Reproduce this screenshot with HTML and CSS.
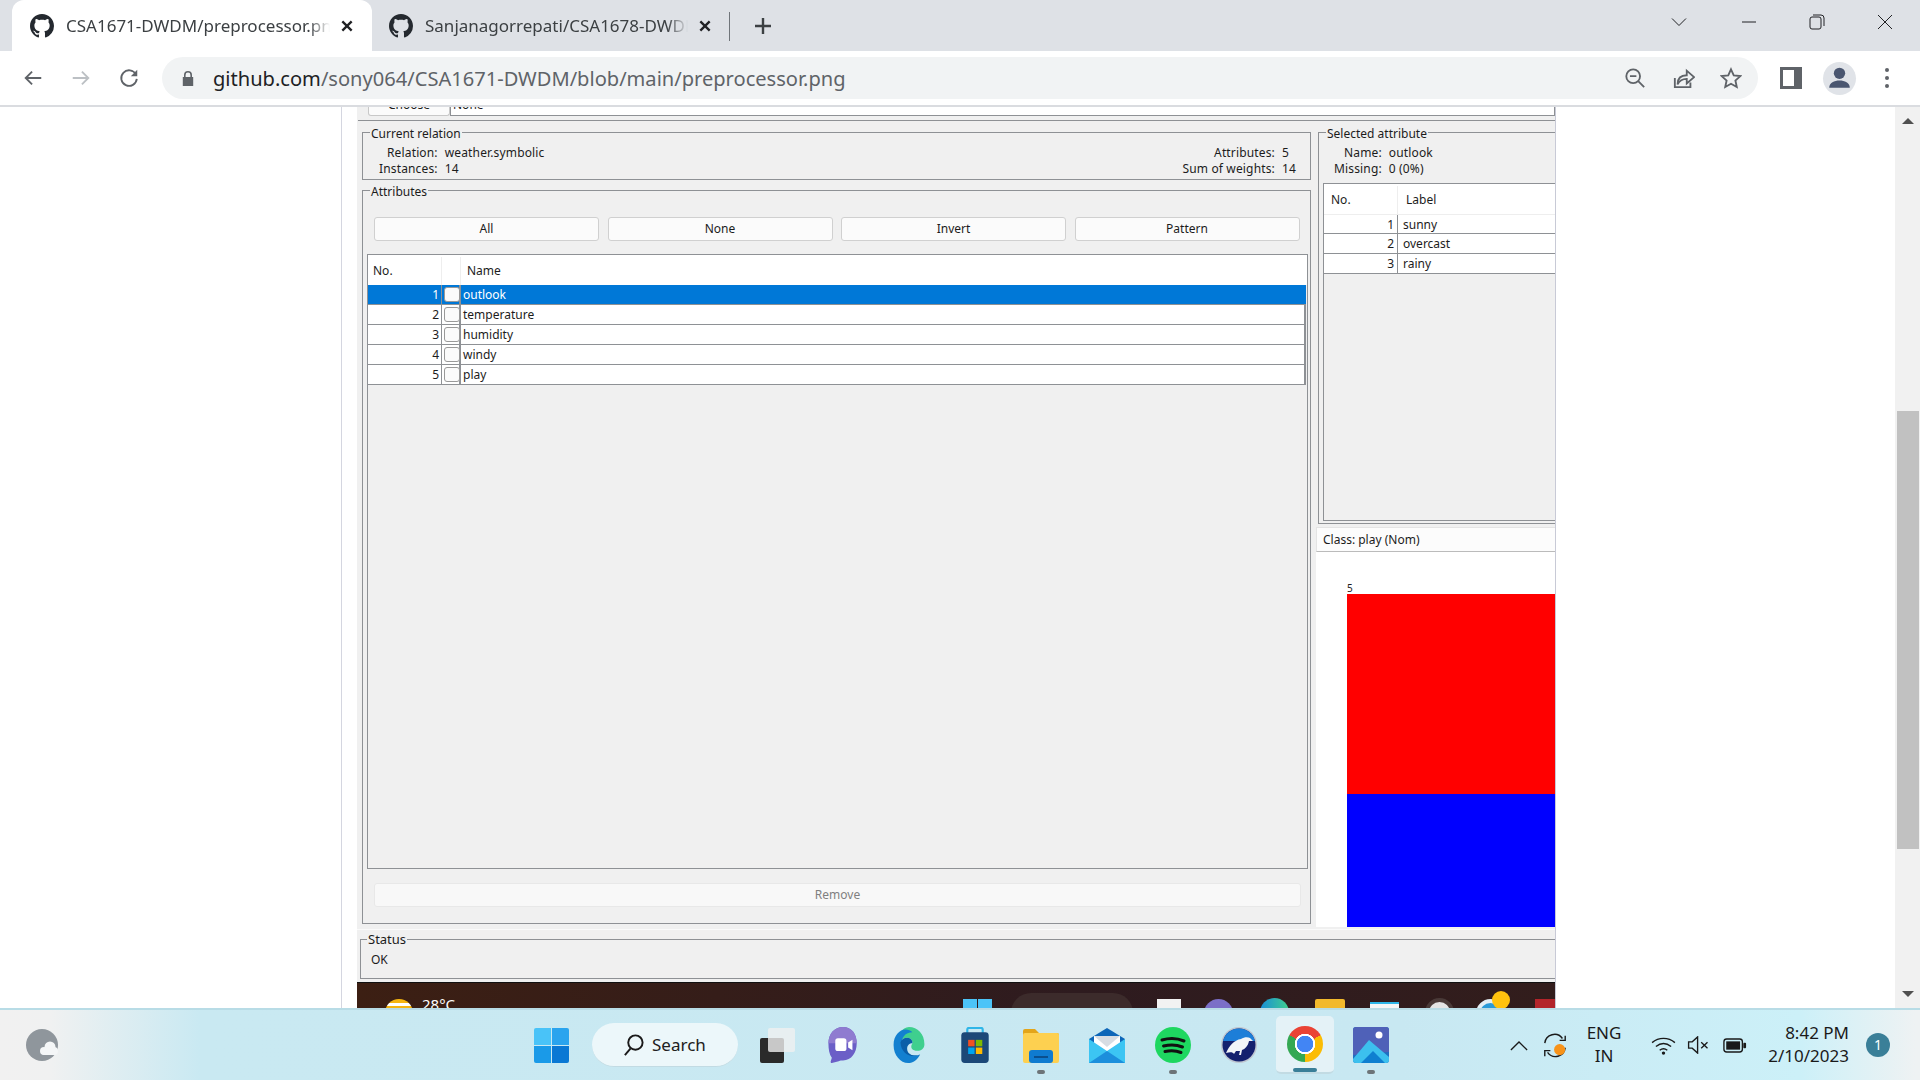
FILE: index.html
```html
<!DOCTYPE html>
<html>

<head>
    <title>CSA1671-DWDM/preprocessor.png</title>
    <link rel="stylesheet" href="styles.css">
</head>

<body>
    <!-- Browser tabs -->
    <div class="tabstrip">
        <div class="tab tab-active">
            <svg class="favicon" viewBox="0 0 16 16"><path d="M8 0C3.58 0 0 3.58 0 8c0 3.54 2.29 6.53 5.47 7.59.4.07.55-.17.55-.38 0-.19-.01-.82-.01-1.49-2.01.37-2.53-.49-2.69-.94-.09-.23-.48-.94-.82-1.13-.28-.15-.68-.52-.01-.53.63-.01 1.08.58 1.23.82.72 1.21 1.87.87 2.33.66.07-.52.28-.87.51-1.07-1.78-.2-3.64-.89-3.64-3.95 0-.87.31-1.59.82-2.15-.08-.2-.36-1.02.08-2.12 0 0 .67-.21 2.2.82.64-.18 1.32-.27 2-.27.68 0 1.36.09 2 .27 1.53-1.04 2.2-.82 2.2-.82.44 1.1.16 1.92.08 2.12.51.56.82 1.27.82 2.15 0 3.07-1.87 3.75-3.65 3.95.29.25.54.73.54 1.48 0 1.07-.01 1.93-.01 2.2 0 .21.15.46.55.38A8.013 8.013 0 0016 8c0-4.42-3.58-8-8-8z"/></svg>
            <span class="tab-title">CSA1671-DWDM/preprocessor.png</span>
            <svg class="tab-close" viewBox="0 0 12 12"><path d="M2 2l8 8M10 2l-8 8"/></svg>
        </div>
        <div class="tab tab-other">
            <svg class="favicon" viewBox="0 0 16 16"><path d="M8 0C3.58 0 0 3.58 0 8c0 3.54 2.29 6.53 5.47 7.59.4.07.55-.17.55-.38 0-.19-.01-.82-.01-1.49-2.01.37-2.53-.49-2.69-.94-.09-.23-.48-.94-.82-1.13-.28-.15-.68-.52-.01-.53.63-.01 1.08.58 1.23.82.72 1.21 1.87.87 2.33.66.07-.52.28-.87.51-1.07-1.78-.2-3.64-.89-3.64-3.95 0-.87.31-1.59.82-2.15-.08-.2-.36-1.02.08-2.12 0 0 .67-.21 2.2.82.64-.18 1.32-.27 2-.27.68 0 1.36.09 2 .27 1.53-1.04 2.2-.82 2.2-.82.44 1.1.16 1.92.08 2.12.51.56.82 1.27.82 2.15 0 3.07-1.87 3.75-3.65 3.95.29.25.54.73.54 1.48 0 1.07-.01 1.93-.01 2.2 0 .21.15.46.55.38A8.013 8.013 0 0016 8c0-4.42-3.58-8-8-8z"/></svg>
            <span class="tab-title">Sanjanagorrepati/CSA1678-DWDM</span>
            <svg class="tab-close" viewBox="0 0 12 12"><path d="M2 2l8 8M10 2l-8 8"/></svg>
        </div>
        <svg class="new-tab" viewBox="0 0 20 20"><path d="M10 2v16M2 10h16"/></svg>
        <div class="window-controls">
            <svg class="win-btn" viewBox="0 0 16 16"><path d="M1 4.5l7 7 7-7"/></svg>
            <svg class="win-btn" viewBox="0 0 16 16"><path d="M1 8h14"/></svg>
            <svg class="win-btn" viewBox="0 0 16 16"><rect x="1" y="3" width="11" height="12" rx="2"/><path d="M4 1h8a3 3 0 0 1 3 3v8"/></svg>
            <svg class="win-btn" viewBox="0 0 16 16"><path d="M1 1l14 14M15 1L1 15"/></svg>
        </div>
    </div>

    <!-- Address bar -->
    <div class="toolbar">
        <div class="tool"><svg class="tool-icon" viewBox="0 0 24 24"><path d="M21 12H4M11 5l-7 7 7 7"/></svg></div>
        <div class="tool tool-off"><svg class="tool-icon" viewBox="0 0 24 24"><path d="M3 12h17M13 5l7 7-7 7"/></svg></div>
        <div class="tool"><svg class="tool-icon" viewBox="0 0 24 24"><path d="M19.5 8A8.5 8.5 0 1 0 20.5 13"/><path class="solid" d="M21 3v7h-7z"/></svg></div>
        <div class="omnibox">
            <svg class="lock" viewBox="0 0 12 16"><path d="M2 7V5a4 4 0 0 1 8 0v2h1.2v9H.8V7zm1.6 0h4.8V5a2.4 2.4 0 0 0-4.8 0z"/></svg>
            <span class="url"><b>github.com</b>/sony064/CSA1671-DWDM/blob/main/preprocessor.png</span>
            <div class="omni-icons">
                <svg class="tool-icon" viewBox="0 0 24 24"><circle cx="10" cy="10" r="7.5"/><path d="M6.5 10h7M15.5 15.5L22 22"/></svg>
                <svg class="tool-icon" viewBox="0 0 24 24"><path d="M2 12v10h17v-5"/><path d="M5 19c0-7 4-10 10-10V4l8 7-8 7v-5c-5 0-8 2-10 6z"/></svg>
                <svg class="tool-icon" viewBox="0 0 24 24"><path d="M12 2.5l3 6.6 7.2.8-5.4 4.8 1.5 7.1-6.3-3.6-6.3 3.6 1.5-7.1L1.800 9.900 9 9.100z"/></svg>
            </div>
        </div>
        <div class="tool tool-first"><svg class="panel-icon" viewBox="0 0 22 22"><path d="M0 0h22v22H0zM3 3v16h11V3z" fill-rule="evenodd"/></svg></div>
        <div class="tool"><div class="avatar"><svg viewBox="0 0 32 32"><circle cx="16" cy="11" r="5.500"/><path d="M6 25c0-5 5-7 10-7s10 2 10 7z"/></svg></div></div>
        <div class="tool"><div class="dots"><i></i><i></i><i></i></div></div>
    </div>

    <div class="viewer">
        <div class="gutter"></div>
        <div class="shot">
            <div class="file-strip">
                <div class="choose"><span>Choose</span></div>
                <div class="filter-field"><span>None</span></div>
            </div>

            <div class="explorer">
                <div class="left-col">
                    <fieldset class="group relation">
                        <legend>Current relation</legend>
                        <div class="summary">
                            <div class="pairs">
                                <span class="key">Relation:</span><span>weather.symbolic</span>
                                <span class="key">Instances:</span><span>14</span>
                            </div>
                            <div class="pairs">
                                <span class="key">Attributes:</span><span>5</span>
                                <span class="key">Sum of weights:</span><span>14</span>
                            </div>
                        </div>
                    </fieldset>

                    <fieldset class="group attributes">
                        <legend>Attributes</legend>
                        <div class="button-row">
                            <div class="btn">All</div>
                            <div class="btn">None</div>
                            <div class="btn">Invert</div>
                            <div class="btn">Pattern</div>
                        </div>
                        <div class="attr-table">
                            <div class="attr-head">
                                <div class="head-no">No.</div>
                                <div class="head-check"></div>
                                <div class="head-name">Name</div>
                            </div>
                            <div class="attr-row selected"><div class="cell-no">1</div><div class="cell-check"><i></i></div><div class="cell-name">outlook</div></div>
                            <div class="attr-row"><div class="cell-no">2</div><div class="cell-check"><i></i></div><div class="cell-name">temperature</div></div>
                            <div class="attr-row"><div class="cell-no">3</div><div class="cell-check"><i></i></div><div class="cell-name">humidity</div></div>
                            <div class="attr-row"><div class="cell-no">4</div><div class="cell-check"><i></i></div><div class="cell-name">windy</div></div>
                            <div class="attr-row"><div class="cell-no">5</div><div class="cell-check"><i></i></div><div class="cell-name">play</div></div>
                        </div>
                        <div class="btn btn-off">Remove</div>
                    </fieldset>
                </div>

                <div class="right-col">
                    <fieldset class="group selected-attr">
                        <legend>Selected attribute</legend>
                        <div class="pairs">
                            <span class="key">Name:</span><span>outlook</span>
                            <span class="key">Missing:</span><span>0 (0%)</span>
                        </div>
                        <div class="label-table">
                            <div class="label-head"><div>No.</div><div class="head-label">Label</div></div>
                            <div class="label-row"><div class="cell-no">1</div><div class="cell-label">sunny</div></div>
                            <div class="label-row"><div class="cell-no">2</div><div class="cell-label">overcast</div></div>
                            <div class="label-row"><div class="cell-no">3</div><div class="cell-label">rainy</div></div>
                        </div>
                    </fieldset>
                    <div class="class-box">Class: play (Nom)</div>
                    <div class="plot">
                        <div class="plot-count">5</div>
                        <div class="bar-red"></div>
                        <div class="bar-blue"></div>
                    </div>
                </div>
            </div>

            <fieldset class="group status">
                <legend>Status</legend>
                <div>OK</div>
            </fieldset>

            <!-- the taskbar of the photographed machine, cut off -->
            <div class="inner-taskbar">
                <div class="inner-sun"></div>
                <span class="inner-temp">28°C</span>
                <div class="inner-start"><i></i><i></i><i></i><i></i></div>
                <div class="inner-pill"><span></span></div>
                <div class="inner-task"></div>
                <div class="inner-teams"></div>
                <div class="inner-edge"></div>
                <div class="inner-folder"></div>
                <div class="inner-bag"></div>
                <div class="inner-round"></div>
                <div class="inner-edge2"><div class="inner-dot"></div></div>
                <div class="inner-mail"></div>
            </div>
        </div>
        <div class="page-rest"></div>
        <div class="scrollbar">
            <div class="arrow-up"></div>
            <div class="thumb"></div>
            <div class="arrow-down"></div>
        </div>
    </div>

    <!-- Windows taskbar -->
    <div class="taskbar">
        <div class="widget">
            <svg viewBox="0 0 32 32" width="32" height="32"><circle cx="16" cy="16" r="16" fill="#8f969c"/><circle cx="24" cy="18" r="5.500" fill="#f4f6f7"/><circle cx="18" cy="22" r="4" fill="#f4f6f7"/><circle cx="28" cy="22" r="4" fill="#f4f6f7"/><rect x="16" y="21" width="14" height="5" rx="2.500" fill="#f4f6f7"/></svg>
        </div>
        <div class="app"><div class="start"><i></i><i></i><i></i><i></i></div></div>
        <div class="search">
            <svg viewBox="0 0 24 24"><circle cx="14" cy="10" r="7.500"/><path d="M9 16l-6 7"/></svg>
            <span>Search</span>
        </div>
        <div class="apps">
            <div class="app"><div class="taskview"><i></i><b></b></div></div>
            <div class="app">
                <svg class="app-icon" viewBox="0 0 36 42"><path d="M18 0c10 0 16 8 16 19s-6 20-16 20c-2 0-3 0-5 1l-8 2c-1 0-2-1-1-3l1-3C2 32 1 26 1 19 1 8 8 0 18 0z" fill="#6b5fc7"/><path d="M18 0c10 0 16 8 16 19H1C1 8 8 0 18 0z" fill="#8f7bd0"/><rect x="9" y="13" width="13" height="15" rx="3" fill="#fff"/><path d="M24 18l5-3v12l-5-3z" fill="#fff"/></svg>
            </div>
            <div class="app">
                <svg class="app-icon" viewBox="0 0 36 42"><path d="M18 0C28 0 36 8 36 20c0 7-7 9-12 7-4-1-4-5-2-8 1-8-12-9-14-1C4 10 10 0 18 0z" fill="#3fcf8e"/><path d="M0 21C0 10 7 3 14 3c3 0 6 1 8 3-8 0-14 6-12 16 2 9 12 14 21 10-3 6-8 10-14 10C8 42 0 33 0 21z" fill="#1380d0"/><path d="M8 18c2-8 15-7 14 1-3 0-7 2-6 8 1 5 8 8 15 5-9 5-22 0-23-14z" fill="#0a5ea8"/></svg>
            </div>
            <div class="app">
                <svg class="app-icon" viewBox="0 0 36 42"><path d="M9 8V3a2 2 0 0 1 2-2h14a2 2 0 0 1 2 2v5" fill="none" stroke="#2fb6e8" stroke-width="2.500"/><rect x="2" y="6" width="32" height="36" rx="4" fill="#1c4878"/><rect x="10" y="15" width="7.500" height="7.500" fill="#f25022"/><rect x="19" y="15" width="7.500" height="7.500" fill="#7fba00"/><rect x="10" y="24" width="7.500" height="7.500" fill="#00a4ef"/><rect x="19" y="24" width="7.500" height="7.500" fill="#ffb900"/></svg>
            </div>
            <div class="app running">
                <svg class="app-icon" viewBox="0 0 36 36"><path d="M0 4a2 2 0 0 1 2-2h10l4 4h18a2 2 0 0 1 2 2v6H0z" fill="#e3a51a"/><rect y="6" width="36" height="30" rx="2" fill="#fdd050"/><rect x="6" y="23" width="24" height="13" rx="3" fill="#0f7bd0"/><rect x="11" y="29" width="14" height="2" fill="#0a4f8e"/></svg>
            </div>
            <div class="app">
                <svg class="app-icon" viewBox="0 0 36 36"><path d="M18 1l18 11v24H0V12z" fill="#0d66b8"/><path d="M5 9h26v12l-13 8-13-8z" fill="#fff"/><path d="M5 9h26l-13 11z" fill="#d7dde3"/><path d="M0 12l18 12 18-12v24H0z" fill="#3cc5f3"/><path d="M0 36l18-12 18 12z" fill="#1c8fdc"/></svg>
            </div>
            <div class="app running">
                <svg class="app-icon" viewBox="0 0 36 36"><circle cx="18" cy="18" r="18" fill="#1ed760"/><path d="M7 13c7-2 15-2 22 1M8.500 19c6-1.500 13-1.500 19 1M10 24.500c5-1 11-1 16 1" fill="none" stroke="#111" stroke-width="3" stroke-linecap="round"/></svg>
            </div>
            <div class="app">
                <svg class="app-icon" viewBox="0 0 36 36"><circle cx="18" cy="18" r="18" fill="#bfc6d0"/><circle cx="18" cy="18" r="16.500" fill="#14206e"/><path d="M18 1.500A16.500 16.500 0 0 1 34 14H2A16.500 16.500 0 0 1 18 1.500z" fill="#1d7ed8"/><path d="M5 26c3-7 8-13 15-14 3-2 7-2 9-1l3 3-4 0c-1 5-4 8-7 9l-1 5h-2l1-4-4 0-2 3c-1-2-4-2-8-1z" fill="#f2f4f8"/></svg>
            </div>
            <div class="app app-active">
                <div class="chrome"></div>
            </div>
            <div class="app running">
                <svg class="app-icon" viewBox="0 0 36 36"><rect width="36" height="36" rx="3" fill="#1e6fc2"/><path d="M0 3a3 3 0 0 1 3-3h30a3 3 0 0 1 3 3v22L0 28z" fill="#4f61b8"/><circle cx="26" cy="8" r="3.500" fill="#fff"/><path d="M0 32l16-19 20 17v3a3 3 0 0 1-3 3H3a3 3 0 0 1-3-3z" fill="#3cc0ee"/><path d="M8 36l12-12 12 12z" fill="#0f7fd0"/></svg>
            </div>
        </div>
        <div class="tray">
            <svg class="tray-icon chev" viewBox="0 0 20 12"><path d="M1 11l9-9 9 9"/></svg>
            <svg class="tray-icon sync" viewBox="0 0 28 28"><path d="M3 12a10.500 10.500 0 0 1 19-5M25 4v5h-6M25 17a10.500 10.500 0 0 1-19 5M3 26v-6h6"/><circle class="sync-dot" cx="19" cy="19" r="6"/></svg>
            <div class="lang"><span>ENG</span><span>IN</span></div>
            <svg class="tray-icon wifi" viewBox="0 0 26 20"><path d="M1 7c7-6 17-6 24 0M5 11c5-4 11-4 16 0M9 15c2.500-2 5.500-2 8 0"/><circle class="solid" cx="13" cy="18" r="1.800"/></svg>
            <svg class="tray-icon speaker" viewBox="0 0 24 20"><path d="M1 6.500h4L11 1v18l-6-5.500H1zM15 7l7 6.500M22 7l-7 6.500"/></svg>
            <svg class="tray-icon battery" viewBox="0 0 26 16"><rect x="1" y="1" width="20" height="14" rx="3"/><rect class="solid" x="3.500" y="3.500" width="15" height="9"/><rect class="solid" x="22" y="5" width="3" height="6" rx="1"/></svg>
            <div class="clock"><span>8:42 PM</span><span>2/10/2023</span></div>
            <div class="badge">1</div>
        </div>
    </div>
</body>

</html>
```

FILE: styles.css
```css
* {
    box-sizing: border-box;
}

body {
    margin: 0;
    width: 1920px;
    height: 1080px;
    overflow: hidden;
    display: flex;
    flex-direction: column;
    background: #fff;
    font-family: "Noto Sans", sans-serif;
}

/* Tab strip */
.tabstrip {
    height: 51px;
    flex: none;
    display: flex;
    background: #dee1e6;
    color: #3c4043;
}

.tab {
    display: flex;
    align-items: center;
    font-size: 17px;
}

.tab-active {
    width: 360px;
    margin-left: 12px;
    padding: 0 18px 0 18px;
    background: #fff;
    border-radius: 12px 12px 0 0;
}

.tab-other {
    position: relative;
    width: 358px;
    padding: 0 18px 0 17px;
}

.tab-other::after {
    content: "";
    position: absolute;
    right: 0;
    top: 12px;
    height: 29px;
    border-right: 1px solid #70757a;
}

.favicon {
    width: 24px;
    height: 24px;
    flex: none;
    fill: #24292f;
}

.tab-title {
    flex: 1;
    margin-left: 12px;
    white-space: nowrap;
    overflow: hidden;
    -webkit-mask-image: linear-gradient(to right, #000 92%, transparent);
    mask-image: linear-gradient(to right, #000 92%, transparent);
}

.tab-close {
    width: 14px;
    height: 14px;
    flex: none;
    margin-left: 10px;
    fill: none;
    stroke: #202124;
    stroke-width: 2;
}

.new-tab {
    width: 20px;
    height: 20px;
    margin: 16px 0 0 23px;
    fill: none;
    stroke: #3c4043;
    stroke-width: 2.4;
}

.window-controls {
    margin-left: auto;
    margin-right: 1px;
    display: flex;
}

.win-btn {
    box-sizing: content-box;
    width: 16px;
    height: 16px;
    padding: 14px 26px 21px;
    fill: none;
    stroke: #202124;
    stroke-width: 1;
}

.win-btn:first-child {
    padding-right: 28px;
}

/* Address bar */
.toolbar {
    height: 56px;
    flex: none;
    display: flex;
    padding: 6px 9px 8px 9px;
    background: #fff;
    border-bottom: 2px solid #dadce0;
}

.tool {
    width: 48px;
    height: 42px;
    flex: none;
    display: flex;
    align-items: center;
    justify-content: center;
}

.tool-icon {
    width: 22px;
    height: 22px;
    fill: none;
    stroke: #5f6368;
    stroke-width: 2;
}

.tool-icon .solid {
    fill: #5f6368;
    stroke: none;
}

.tool-off .tool-icon {
    stroke: #bcc0c4;
}

.tool-first {
    margin-left: 9px;
}

.omnibox {
    flex: 1;
    margin-left: 9px;
    height: 42px;
    display: flex;
    align-items: center;
    padding: 0 16px 0 20px;
    border-radius: 21px;
    background: #f1f3f4;
}

.lock {
    width: 12px;
    height: 16px;
    fill: #5f6368;
}

.url {
    margin-left: 19px;
    font-size: 20.08px;
    color: #5f6368;
    white-space: nowrap;
}

.url b {
    font-weight: normal;
    color: #202124;
}

.omni-icons {
    margin-left: auto;
    display: flex;
    gap: 25px;
}

.omni-icons svg:first-child {
    margin-right: 2px;
}

.panel-icon {
    width: 22px;
    height: 22px;
    fill: #5f6368;
}

.avatar {
    width: 33px;
    height: 33px;
    border-radius: 50%;
    background: #e0e3e8;
}

.avatar svg {
    display: block;
    fill: #4a5670;
}

.dots {
    display: flex;
    flex-direction: column;
    gap: 4px;
}

.dots i {
    width: 4px;
    height: 4px;
    border-radius: 50%;
    background: #5f6368;
}

/* Page area */
.viewer {
    flex: 1;
    display: flex;
    min-height: 0;
}

.gutter {
    width: 342px;
    flex: none;
    border-right: 1px solid #d4d6e0;
}

.shot {
    width: 1199px;
    margin-left: 15px;
    flex: none;
    overflow: hidden;
    background: #f0f0f0;
    color: #1c1c1c;
    font-size: 12px;
    line-height: 16px;
    border-right: 1px solid #c8cad6;
}

.page-rest {
    flex: 1;
}

.scrollbar {
    width: 25px;
    flex: none;
    display: flex;
    flex-direction: column;
    align-items: center;
    padding-top: 11px;
    background: #f1f1f1;
}

.arrow-up {
    border: 6px solid transparent;
    border-top: 0;
    border-bottom: 6px solid #505050;
}

.thumb {
    width: 22px;
    height: 438px;
    margin-top: 287px;
    background: #c1c1c1;
}

.arrow-down {
    margin-top: 142px;
    border: 6px solid transparent;
    border-bottom: 0;
    border-top: 6px solid #505050;
}

/* Weka window */
.file-strip {
    height: 14px;
    display: flex;
    margin: 0 0 0 1px;
    padding-left: 10px;
    background: #f0f0f0;
    border-bottom: 1px solid #8e9195;
    overflow: hidden;
}

.choose {
    width: 82px;
    height: 9px;
    display: flex;
    justify-content: center;
    align-items: flex-end;
    background: #fbfbfb;
    border: 1px solid #c8c8c8;
    border-top: 0;
    border-radius: 0 0 3px 3px;
}

.filter-field {
    flex: 1;
    height: 9px;
    padding-left: 2px;
    display: flex;
    align-items: flex-end;
    background: #fff;
    border: 1px solid #8e9195;
    border-top: 0;
}

.choose span,
.filter-field span {
    line-height: 14px;
    flex: none;
    margin-bottom: 3px;
}

.explorer {
    display: flex;
    height: 809px;
    padding-left: 1px;
    border-bottom: 1px solid #fafafa;
}

.left-col {
    width: 958px;
    flex: none;
    padding: 1px 5px 0 4px;
}

.group {
    margin: 0;
    min-width: 0;
    border: 1px solid #8e9195;
    border-radius: 0;
}

/* the line of a group box runs just above the middle of its title */
.group legend {
    padding: 4px 1px 0;
    margin-left: 0;
    line-height: 16px;
}

.relation {
    height: 58px;
    padding: 3px 14px 0 8px;
}

.relation legend {
    margin-left: -1px;
}

.summary {
    display: flex;
    justify-content: space-between;
}

.pairs {
    display: grid;
    grid-template-columns: auto auto;
    column-gap: 7px;
    justify-content: start;
    letter-spacing: 0.15px;
}

.key {
    text-align: right;
}

.relation .pairs:first-child {
    margin-left: 8px;
}

.attributes {
    height: 744px;
    padding: 17px 2px 0 4px;
}

.attributes legend {
    margin-left: 3px;
}

.button-row {
    display: grid;
    grid-template-columns: repeat(4, 225px);
    column-gap: 8.5px;
    margin-left: 7px;
}

.btn {
    height: 24px;
    line-height: 22px;
    text-align: center;
    background: #fbfbfb;
    border: 1px solid #d0d0d0;
    border-radius: 3px;
}

.attr-table {
    height: 615px;
    margin-top: 13px;
    background: #f0f0f0;
    border: 1px solid #8e9195;
}

.attr-head {
    height: 30px;
    display: flex;
    align-items: center;
    padding-top: 2px;
    background: #fff;
}

.head-no {
    width: 74px;
    padding-left: 5px;
    line-height: 28px;
    border-right: 1px solid #eee;
}

.head-check {
    width: 19px;
    height: 28px;
    border-right: 1px solid #eee;
}

.head-name {
    padding-left: 6px;
}

.attr-row {
    height: 20px;
    display: flex;
    margin-right: 1px;
    background: #fff;
    border-bottom: 1px solid #8e9195;
    border-right: 2px solid #8e9195;
}

.attr-row.selected {
    background: #0078d7;
    color: #fff;
    border-right: 0;
}

.cell-no {
    width: 74px;
    padding-right: 2px;
    text-align: right;
    border-right: 1px solid #8e9195;
    line-height: 19px;
}

.cell-check {
    width: 19px;
    padding: 2px 1px 0 2px;
    border-right: 2px solid #8e9195;
}

.cell-check i {
    display: block;
    width: 16px;
    height: 15px;
    background: #fbfbfb;
    border: 1px solid #999;
    border-radius: 3px;
}

.cell-name {
    padding-left: 2px;
    line-height: 19px;
}

.btn-off {
    margin: 14px 7px 0;
    color: #808080;
    background: #f8f8f8;
    border-color: #e8e8e8;
}

/* Right column */
.right-col {
    flex: 1;
    min-width: 0;
    overflow: hidden;
}

.selected-attr {
    width: 300px;
    height: 402px;
    margin: 1px 0 0 2px;
    padding: 3px 0 0 4px;
}

.selected-attr legend {
    margin-left: 3px;
}

.selected-attr .pairs {
    margin-left: 11px;
}

.label-table {
    height: 338px;
    margin: 6px 0 0 0;
    border: 1px solid #8e9195;
}

.label-head {
    height: 30px;
    display: flex;
    align-items: center;
    padding-top: 2px;
    background: #fff;
}

.label-head div:first-child {
    width: 74px;
    padding-left: 7px;
    line-height: 28px;
    border-right: 1px solid #eee;
}

.head-label {
    padding-left: 8px;
}

.label-row {
    height: 20px;
    display: flex;
    background: #fff;
    border-bottom: 1px solid #8e9195;
}

.label-row:nth-child(2) {
    border-top: 1px solid #eee;
    line-height: 18px;
}

.label-row .cell-no {
    width: 74px;
    padding-right: 3px;
}

.cell-label {
    padding-left: 5px;
    line-height: 19px;
}

.class-box {
    height: 25px;
    margin-top: 3px;
    padding-left: 6px;
    line-height: 23px;
    background: #fcfcfc;
    border-bottom: 1px solid #bbb;
    border-top: 1px solid #e4e4e4;
    border-left: 1px solid #e4e4e4;
}

.plot {
    height: 375px;
    padding-left: 31px;
    background: #fff;
}

.plot-count {
    height: 42px;
    padding-top: 30px;
    font-size: 10px;
    line-height: 12px;
}

.bar-red {
    height: 200px;
    background: #f00;
}

.bar-blue {
    height: 133px;
    background: #00f;
}

.status {
    width: 1300px;
    height: 48px;
    margin: 1px 0 3px 3px;
    padding: 5px 10px 0;
}

.status legend {
    font-size: 13px;
    margin-left: -4px;
    padding: 0 1px;
}

/* Taskbar seen inside the screenshot */
.inner-taskbar {
    height: 26px;
    display: flex;
    overflow: hidden;
    color: #fff;
    background: linear-gradient(to right, #3c1f13, #2e1b1f 60%, #321d1c);
    border-top: 1px solid #111;
}

.inner-sun {
    width: 28px;
    height: 28px;
    margin: 16px 0 0 28px;
    flex: none;
    border-radius: 50%;
    background: linear-gradient(transparent 15%, #fff 15% 25%, transparent 25%), #f5b50f;
}

.inner-temp {
    margin: 11px 0 0 9px;
    width: 50px;
    flex: none;
    line-height: 20px;
    font-size: 15px;
}

.inner-start {
    width: 29px;
    margin: 16px 0 0 491px;
    flex: none;
    display: grid;
    grid-template-columns: 1fr 1fr;
    gap: 1px;
}

.inner-start i {
    height: 14px;
    background: #4cc4f8;
}

.inner-pill {
    width: 122px;
    height: 40px;
    margin: 10px 0 0 19px;
    flex: none;
    border-radius: 20px;
    background: #3c2b2b;
}

.inner-task {
    width: 24px;
    height: 20px;
    margin: 16px 0 0 24px;
    flex: none;
    background: #f2f2f2;
}

.inner-teams {
    width: 29px;
    height: 29px;
    margin: 16px 0 0 23px;
    flex: none;
    border-radius: 50%;
    background: #7b6fc7;
}

.inner-edge {
    width: 29px;
    height: 29px;
    margin: 15px 0 0 27px;
    flex: none;
    border-radius: 50%;
    background: linear-gradient(to right, #1a8ed8, #3fcf8e);
}

.inner-folder {
    width: 30px;
    height: 22px;
    margin: 16px 0 0 26px;
    flex: none;
    background: #f2b92c;
    border-radius: 2px;
}

.inner-bag {
    width: 29px;
    height: 22px;
    margin: 19px 0 0 25px;
    flex: none;
    background: #f6f6f6;
    border-top: 2px solid #2fb6e8;
}

.inner-round {
    width: 29px;
    height: 29px;
    margin: 15px 0 0 26px;
    flex: none;
    border-radius: 50%;
    background: #e4e4e4;
    border: 4px solid #4a3a38;
}

.inner-edge2 {
    position: relative;
    width: 29px;
    height: 29px;
    margin: 16px 0 0 22px;
    flex: none;
    border-radius: 50%;
    background: #2a9ad8;
    border: 4px solid #e4eef4;
}

.inner-dot {
    position: absolute;
    left: 12px;
    top: -12px;
    width: 18px;
    height: 18px;
    border-radius: 50%;
    background: #ffc20e;
}

.inner-mail {
    width: 20px;
    height: 20px;
    margin: 16px 0 0 30px;
    flex: none;
    background: #b3242a;
}

/* Windows taskbar */
.taskbar {
    height: 72px;
    flex: none;
    display: flex;
    align-items: center;
    background: linear-gradient(to right, #f1f1f1 0, #f0f1f1 50px, #c9e9f2 200px, #c8e8f2 1400px, #ccf0f8 1800px, #eef2f3 1915px);
    border-top: 2px solid #b8dce6;
}

.widget {
    width: 518px;
    flex: none;
    padding-left: 26px;
}

.widget svg {
    display: block;
}

.app {
    position: relative;
    width: 66px;
    height: 58px;
    flex: none;
    display: flex;
    align-items: center;
    justify-content: center;
}

.app-icon {
    width: 36px;
    height: 36px;
}

.app.running::after,
.app-active::after {
    content: "";
    position: absolute;
    left: 29px;
    bottom: 0;
    width: 8px;
    height: 4px;
    border-radius: 2px;
    background: #6d7478;
}

.start {
    width: 35px;
    height: 35px;
    display: grid;
    grid-template-columns: 1fr 1fr;
    gap: 1px;
}

.start i {
    background: #1c96e8;
}

.start i:first-child {
    background: #49c3f8;
    border-radius: 2px 0 0 0;
}

.start i:nth-child(2) {
    background: #2aa4ee;
    border-radius: 0 2px 0 0;
}

.start i:nth-child(3) {
    background: #1a9ae8;
    border-radius: 0 0 0 2px;
}

.start i:last-child {
    background: #0a78d4;
    border-radius: 0 0 2px 0;
}

.search {
    width: 146px;
    height: 44px;
    margin-left: 8px;
    margin-right: 6px;
    flex: none;
    display: flex;
    align-items: center;
    padding-left: 30px;
    font-size: 17px;
    color: #202020;
    background: #ecf7fa;
    border-radius: 22px;
    border-bottom: 1px solid #c2dbe3;
}

.search svg {
    width: 23px;
    height: 23px;
    fill: none;
    stroke: #1a1a1a;
    stroke-width: 2;
    margin-right: 7px;
}

.apps {
    display: flex;
}

.taskview {
    position: relative;
    width: 35px;
    height: 35px;
}

.taskview i {
    position: absolute;
    left: 0;
    bottom: 0;
    width: 24px;
    height: 25px;
    background: #2a2a2a;
    border-radius: 2px;
}

.taskview b {
    position: absolute;
    right: 0;
    top: 0;
    width: 27px;
    height: 24px;
    background: rgba(240, 240, 240, 0.8);
    border-radius: 2px;
}

.app-active {
    width: 58px;
    margin: 0 4px;
    background: #e4f2f7;
    border-radius: 5px;
    border-bottom: 2px solid #c2dbe3;
}

.app-active::after {
    left: 17px;
    bottom: 0;
    width: 24px;
    background: #3a7f98;
}

.chrome {
    width: 36px;
    height: 36px;
    border-radius: 50%;
    background: radial-gradient(circle, #4285f4 0 8px, #fff 8.500px 10px, transparent 10.500px), conic-gradient(#ea4335 0 60deg, #fbbc05 60deg 180deg, #34a853 180deg 300deg, #ea4335 300deg);
}

/* Tray */
.tray {
    margin-left: auto;
    display: flex;
    align-items: center;
    padding-right: 30px;
    color: #1a1a1a;
    font-size: 17px;
}

.tray-icon {
    flex: none;
    fill: none;
    stroke: #1a1a1a;
    stroke-width: 1.500;
}

.tray-icon .solid {
    fill: #1a1a1a;
    stroke: none;
}

.chev {
    width: 18px;
    height: 11px;
    margin-right: 14px;
}

.sync {
    width: 26px;
    height: 26px;
    margin-right: 6px;
}

.sync-dot {
    fill: #f7931a;
    stroke: none;
}

.lang {
    width: 60px;
    margin-right: 17px;
    margin-bottom: 2px;
    display: flex;
    flex-direction: column;
    align-items: center;
    line-height: 23px;
}

.wifi {
    width: 25px;
    height: 19px;
    margin-right: 11px;
}

.speaker {
    width: 23px;
    height: 18px;
    margin-right: 13px;
}

.battery {
    width: 24px;
    height: 15px;
}

.clock {
    width: 102px;
    margin-bottom: 2px;
    display: flex;
    flex-direction: column;
    align-items: flex-end;
    line-height: 23px;
}

.badge {
    width: 24px;
    height: 24px;
    margin-left: 17px;
    border-radius: 50%;
    text-align: center;
    line-height: 24px;
    font-size: 14px;
    color: #fff;
    background: #3a7f98;
}
```
